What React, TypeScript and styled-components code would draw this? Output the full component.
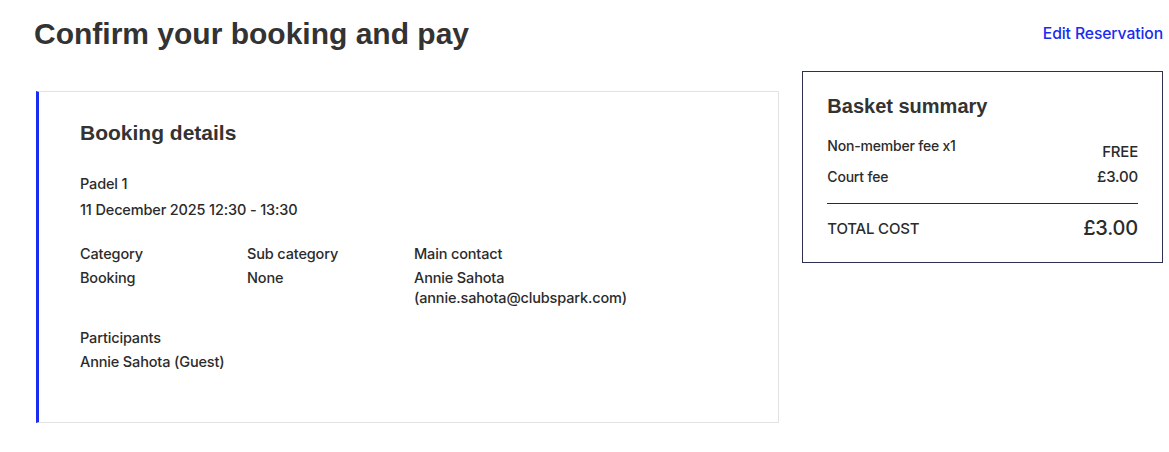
import React from "react";
import styled, { createGlobalStyle } from "styled-components";

const Global = createGlobalStyle`
  html, body { margin: 0; padding: 0; background: #fff; }
  body { font-family: Inter, "Noto Sans", sans-serif; color: #2b2b2b; }
  * { box-sizing: border-box; }
`;

const Page = styled.div`
  width: 1169px;
  padding: 14px 6px 0 34px;
`;

const Header = styled.div`
  display: flex;
  justify-content: space-between;
  align-items: flex-start;
`;

const Title = styled.h1`
  margin: 0;
  font-family: "Liberation Sans", Arial, sans-serif;
  font-weight: 700;
  font-size: 30px;
  line-height: 40px;
  color: #333;
`;

const EditLink = styled.a`
  margin-top: 10px;
  font-size: 15.7px;
  font-weight: 500;
  color: #1a2cf0;
  text-decoration: none;
  letter-spacing: -0.1px;
`;

const Body = styled.div`
  display: flex;
  align-items: flex-start;
  gap: 23px;
  margin-top: 17px;
`;

const DetailsCard = styled.section`
  width: 744px;
  margin-top: 20px;
  margin-left: 2px;
  border: 1px solid #e2e2e2;
  border-left: 3px solid #1a2cf0;
  padding: 27px 40px 50px 41px;
`;

const CardTitle = styled.h2<{ $size?: number; $mb?: number }>`
  margin: 0 0 ${(p) => p.$mb ?? 27}px;
  font-family: "Liberation Sans", Arial, sans-serif;
  font-weight: 700;
  font-size: ${(p) => p.$size ?? 21}px;
  line-height: 28px;
  color: #333;
`;

const Line = styled.div`
  font-size: 14.5px;
  font-weight: 500;
  line-height: 20px;
  letter-spacing: -0.15px;
  & + & { margin-top: 6px; }
`;

const Block = styled.div<{ $gap?: number }>`
  margin-top: ${(p) => p.$gap ?? 0}px;
`;

const Grid = styled.div`
  display: grid;
  grid-template-columns: 167px 167px 1fr;
  margin-top: 24px;
`;

const Field = styled.div`
  display: flex;
  flex-direction: column;
  gap: 4px;
`;

const Text = styled.div`
  font-size: 14.5px;
  font-weight: 500;
  line-height: 20px;
  letter-spacing: -0.15px;
`;

const Basket = styled.aside`
  width: 361px;
  border: 1px solid #2d3050;
  padding: 20px 24px 22px 24px;
`;

const Row = styled.div`
  display: flex;
  justify-content: space-between;
  align-items: flex-start;
  font-size: 14px;
  font-weight: 500;
  letter-spacing: -0.2px;
  line-height: 20px;
  & + & { margin-top: 5px; }
`;

const Amount = styled.span<{ $drop?: number }>`
  font-size: 15px;
  margin-top: ${(p) => p.$drop ?? 0}px;
`;

const Divider = styled.hr`
  border: 0;
  border-top: 1px solid #2b2b2b;
  margin: 16px 0 12px;
`;

const TotalRow = styled.div`
  display: flex;
  justify-content: space-between;
  align-items: center;
  font-size: 15px;
  font-weight: 500;
  letter-spacing: -0.2px;
`;

const TotalAmount = styled.span`
  font-size: 20px;
  font-weight: 500;
`;

export default function App() {
  return (
    <>
      <Global />
      <Page>
        <Header>
          <Title>Confirm your booking and pay</Title>
          <EditLink href="#">Edit Reservation</EditLink>
        </Header>
        <Body>
          <DetailsCard>
            <CardTitle>Booking details</CardTitle>
            <Line>Padel 1</Line>
            <Line>11 December 2025 12:30 - 13:30</Line>
            <Grid>
              <Field>
                <Text>Category</Text>
                <Text>Booking</Text>
              </Field>
              <Field>
                <Text>Sub category</Text>
                <Text>None</Text>
              </Field>
              <Field>
                <Text>Main contact</Text>
                <Text>
                  Annie Sahota
                  <br />
                  (annie.sahota@clubspark.com)
                </Text>
              </Field>
            </Grid>
            <Block $gap={20}>
              <Field>
                <Text>Participants</Text>
                <Text>Annie Sahota (Guest)</Text>
              </Field>
            </Block>
          </DetailsCard>
          <Basket>
            <CardTitle $size={20} $mb={16}>Basket summary</CardTitle>
            <Row>
              <span>Non-member fee x1</span>
              <Amount $drop={6}>FREE</Amount>
            </Row>
            <Row>
              <span>Court fee</span>
              <Amount>£3.00</Amount>
            </Row>
            <Divider />
            <TotalRow>
              <span>TOTAL COST</span>
              <TotalAmount>£3.00</TotalAmount>
            </TotalRow>
          </Basket>
        </Body>
      </Page>
    </>
  );
}
